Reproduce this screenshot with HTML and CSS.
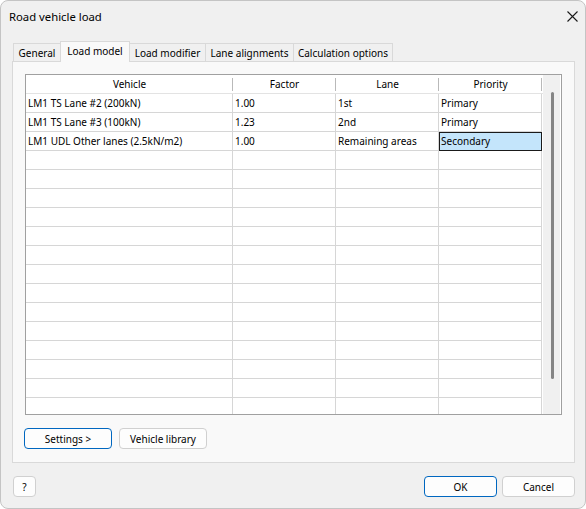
FILE: index.html
```html
<!DOCTYPE html>
<html lang="en">
<head>
    <meta charset="UTF-8">
    <title>Road vehicle load</title>
    <link rel="stylesheet" href="styles.css">
</head>
<body>

    <div class="window">
        <div class="titlebar">
            <span class="title">Road vehicle load</span>
            <svg class="close" width="11" height="11" viewBox="0 0 11 11">
                <path d="M0.5 0.5 L10.5 10.5 M10.5 0.5 L0.5 10.5" stroke="#1a1a1a" stroke-width="1.1" fill="none"/>
            </svg>
        </div>

        <div class="content">
            <div class="tabs">
                <div class="tab tab-general">General</div>
                <div class="tab tab-model active">Load model</div>
                <div class="tab tab-modifier">Load modifier</div>
                <div class="tab tab-lanes">Lane alignments</div>
                <div class="tab tab-calc">Calculation options</div>
            </div>

            <div class="panel">
                <div class="grid">
                    <div class="table" id="table">
                        <div class="row head">
                            <div class="cell">Vehicle</div>
                            <div class="cell">Factor</div>
                            <div class="cell">Lane</div>
                            <div class="cell">Priority</div>
                            <div class="cell spare"></div>
                        </div>
                    </div>
                    <div class="scrollbar">
                        <div class="thumb"></div>
                    </div>
                </div>

                <div class="panel-buttons">
                    <button class="btn btn-default">Settings &gt;</button>
                    <button class="btn">Vehicle library</button>
                </div>
            </div>

            <div class="footer">
                <button class="btn btn-help">?</button>
                <div class="footer-right">
                    <button class="btn btn-default btn-ok">OK</button>
                    <button class="btn btn-ok">Cancel</button>
                </div>
            </div>
        </div>
    </div>

    <script>
        const loads = [
            { vehicle: "LM1 TS Lane #2 (200kN)", factor: "1.00", lane: "1st", priority: "Primary" },
            { vehicle: "LM1 TS Lane #3 (100kN)", factor: "1.23", lane: "2nd", priority: "Primary" },
            { vehicle: "LM1 UDL Other lanes (2.5kN/m2)", factor: "1.00", lane: "Remaining areas", priority: "Secondary", selected: true }
        ];

        // fill the rest of the visible area with empty rows
        const totalRows = 17;
        const table = document.getElementById("table");

        for (let i = 0; i < totalRows; i++) {
            const item = loads[i] || { vehicle: "", factor: "", lane: "", priority: "" };
            const row = document.createElement("div");
            row.className = "row";
            row.innerHTML =
                `<div class="cell">${item.vehicle}</div>` +
                `<div class="cell">${item.factor}</div>` +
                `<div class="cell">${item.lane}</div>` +
                `<div class="cell${item.selected ? " selected" : ""}">${item.priority}</div>` +
                `<div class="cell spare"></div>`;
            table.appendChild(row);
        }
    </script>
</body>
</html>
```

FILE: styles.css
```css
body {
    margin: 0;
    padding: 0;
    background-color: #ffffff;
    font-family: 'Noto Sans', 'Open Sans', sans-serif;
    font-size: 10px;
    color: #000;
}

.window {
    width: 586px;
    height: 509px;
    box-sizing: border-box;
    border: 1px solid #c4c4c4;
    border-radius: 8px;
    background-color: #f0f0f0;
    display: flex;
    flex-direction: column;
    overflow: hidden;
}

.titlebar {
    height: 30px;
    display: flex;
    align-items: center;
    padding: 0 7px 0 8px;
    flex-shrink: 0;
}

.title {
    font-size: 11.3px;
}

.close {
    margin-left: auto;
}

.content {
    padding: 10px 10px 0 11px;
    display: flex;
    flex-direction: column;
}

/* tab strip */
.tabs {
    display: flex;
    align-items: flex-end;
    margin-left: 1px;
    height: 20px;
}

.tab {
    height: 18px;
    box-sizing: border-box;
    border: 1px solid #d9d9d9;
    border-bottom: none;
    background-color: #f0f0f0;
    display: flex;
    align-items: center;
    justify-content: center;
    white-space: nowrap;
    margin-left: -1px;
    padding-top: 1px;
}

.tab:first-child {
    margin-left: 0;
}

.tab.active {
    height: 21px;
    margin-bottom: -1px;
    padding-top: 0;
    padding-bottom: 2px;
    background-color: #f9f9f9;
    position: relative;
    z-index: 1;
}

.tab-general { width: 48px; }
.tab-model { width: 70px; }
.tab-modifier { width: 77px; }
.tab-lanes { width: 89px; }
.tab-calc { width: 100px; }

.panel {
    height: 402px;
    box-sizing: border-box;
    border: 1px solid #d9d9d9;
    background-color: #f9f9f9;
    padding: 12px 12px 0 12px;
}

/* data grid */
.grid {
    height: 341px;
    box-sizing: border-box;
    border: 1px solid #a0a0a0;
    display: flex;
    background-color: #fff;
}

.table {
    width: 517px;
    overflow: hidden;
}

.row {
    display: grid;
    grid-template-columns: 207px 103px 103px 103px 1px;
    height: 19px;
}

.cell {
    box-sizing: border-box;
    border-right: 1px solid #d6d6d6;
    border-bottom: 1px solid #d6d6d6;
    padding-left: 2px;
    display: flex;
    align-items: center;
    white-space: nowrap;
    overflow: hidden;
}

.cell.spare {
    border: none;
}

.head .cell {
    justify-content: center;
    padding-left: 0;
    border-right: none;
    border-bottom: 1px solid #e3e3e3;
    background: linear-gradient(#b9b9b9, #b9b9b9) right 3px / 1px 13px no-repeat;
}

.head .cell.spare {
    background: none;
}

.cell.selected {
    background-color: #c4e5fb;
    outline: 1px solid #1a1a1a;
    outline-offset: -1px;
}

.scrollbar {
    width: 17px;
    box-sizing: border-box;
    background-color: #f0f0f0;
    padding: 17px 6px 35px 8px;
    display: flex;
}

.thumb {
    width: 3px;
    background-color: #858585;
    border-radius: 2px;
}

/* buttons */
.btn {
    height: 21px;
    box-sizing: border-box;
    border: 1px solid #d0d0d0;
    border-radius: 4px;
    background-color: #fdfdfd;
    font-family: inherit;
    font-size: 10px;
    color: #000;
    padding: 0;
}

.btn-default {
    border-color: #0067c0;
}

.panel-buttons {
    display: flex;
    gap: 7px;
    margin: 13px 0 0 -1px;
}

.panel-buttons .btn {
    width: 88px;
}

.footer {
    display: flex;
    justify-content: space-between;
    align-items: center;
    margin-top: 13px;
    padding-left: 1px;
}

.btn-help {
    width: 23px;
}

.footer-right {
    display: flex;
    gap: 5px;
}

.btn-ok {
    width: 73px;
}
```
